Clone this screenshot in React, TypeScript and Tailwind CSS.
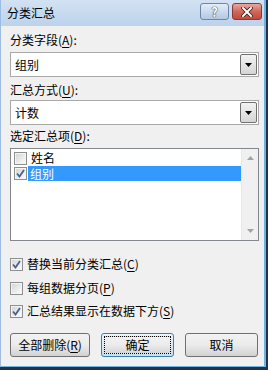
import type { ReactNode } from 'react';

const CheckBox = ({ checked }: { checked: boolean }) => (
  <span className="flex h-[13px] w-[13px] shrink-0 items-center justify-center border border-[#8e8f8f] bg-white">
    <span className="flex h-[11px] w-[11px] items-center justify-center border border-[#f4f4f4] bg-gradient-to-br from-[#d6d6d6] to-[#fbfbfb]">
      {checked && (
        <svg width="9" height="9" viewBox="0 0 9 9">
          <path d="M1 4.5 L3.5 7.5 L8 1" fill="none" stroke="#4a5f8f" strokeWidth="1.8" />
        </svg>
      )}
    </span>
  </span>
);

const Key = ({ children }: { children: ReactNode }) => (
  <span className="underline underline-offset-[2px]">{children}</span>
);

const Combo = ({ value }: { value: string }) => (
  <div className="flex h-[25px] items-stretch border border-[#a9a9a9] bg-white">
    <div className="flex flex-1 items-center pl-[4px]">{value}</div>
    <div className="m-[1px] flex w-[17px] items-center justify-center rounded-[2px] border border-[#707070] bg-gradient-to-b from-[#f2f2f2] to-[#d5d5d5]">
      <svg width="7" height="4" viewBox="0 0 7 4">
        <path d="M0 0 H7 L3.5 4 Z" fill="#000" />
      </svg>
    </div>
  </div>
);

const Button = ({ children, main }: { children: ReactNode; main?: boolean }) => (
  <button
    className={
      main
        ? 'flex h-[24px] w-[73px] items-center justify-center rounded-[3px] border border-[#3c7fb1] bg-gradient-to-b from-[#eaf6fd] to-[#c4e0f2] p-[2px]'
        : 'flex h-[24px] w-[73px] items-center justify-center rounded-[3px] border border-[#707070] bg-gradient-to-b from-[#f2f2f2] via-[#ebebeb] to-[#d2d2d2]'
    }
  >
    {main ? (
      <span className="flex h-full w-full items-center justify-center border border-dotted border-black bg-gradient-to-b from-[#f2f2f2] via-[#ebebeb] to-[#d6d6d6]">
        {children}
      </span>
    ) : (
      children
    )}
  </button>
);

const App = () => {
  return (
    <div className="flex h-[370px] w-[268px] flex-col bg-[#233246] font-['Noto_Sans_CJK_SC',sans-serif] text-[12px] leading-[16px] text-black">
      <div className="flex flex-1">
        <div className="flex w-[264px] flex-col border-l border-[#9cbde0]">
          {/* title bar */}
          <div className="flex h-[26px] items-center bg-gradient-to-b from-[#d3e2f3] to-[#bcd2eb] pl-[6px] pr-[2px]">
            <span>分类汇总</span>
            <div className="ml-auto flex gap-[3px] self-start pt-[3px]">
              <div className="flex h-[17px] w-[29px] items-center justify-center rounded-[3px] border border-[#6e86a6] bg-gradient-to-b from-[#e4edf8] to-[#b2c8e4]">
                <span className="text-[13px] font-bold leading-none text-white [text-shadow:0_0_1px_#222,0_0_1px_#222]">?</span>
              </div>
              <div className="flex h-[17px] w-[30px] items-center justify-center rounded-[3px] border border-[#8a3a32] bg-gradient-to-b from-[#e8a99d] via-[#d0685a] to-[#c24a3c]">
                <svg width="12" height="10" viewBox="0 0 12 10">
                  <path d="M2 1 L10 9 M10 1 L2 9" stroke="#3a1a16" strokeWidth="3.6" strokeLinecap="square" />
                  <path d="M2 1 L10 9 M10 1 L2 9" stroke="#fff" strokeWidth="2" strokeLinecap="square" />
                </svg>
              </div>
            </div>
          </div>

          {/* content */}
          <div className="flex flex-1 flex-col bg-[#f0f0f0] pl-[9px] pr-[5px]">
            <div className="mt-[6px]">
              分类字段(<Key>A</Key>):
            </div>
            <div className="mt-[4px]">
              <Combo value="组别" />
            </div>
            <div className="mt-[5px]">
              汇总方式(<Key>U</Key>):
            </div>
            <div className="mt-[2px]">
              <Combo value="计数" />
            </div>
            <div className="mt-[3px]">
              选定汇总项(<Key>D</Key>):
            </div>
            <div className="mt-[4px] flex h-[93px] border border-[#828790] bg-white">
              <div className="flex flex-1 flex-col pt-[1px]">
                <div className="flex h-[16px] items-center pl-[3px]">
                  <CheckBox checked={false} />
                  <span className="ml-[3px] pl-[1px]">姓名</span>
                </div>
                <div className="flex h-[15px] items-center pl-[3px]">
                  <CheckBox checked={true} />
                  <span className="ml-[1px] flex h-full flex-1 items-center bg-[#3399ff] pl-[2px] text-white">组别</span>
                </div>
              </div>
              <div className="flex w-[17px] flex-col items-center justify-between border-l border-[#e8e8e8] bg-[#f0f0f0] py-[7px]">
                <svg width="7" height="4" viewBox="0 0 7 4">
                  <path d="M0 4 H7 L3.5 0 Z" fill="#a3a3a3" />
                </svg>
                <svg width="7" height="4" viewBox="0 0 7 4">
                  <path d="M0 0 H7 L3.5 4 Z" fill="#a3a3a3" />
                </svg>
              </div>
            </div>

            <div className="mt-[15px] flex h-[16px] items-center gap-[4px]">
              <CheckBox checked={true} />
              <span>
                替换当前分类汇总(<Key>C</Key>)
              </span>
            </div>
            <div className="mt-[8px] flex h-[16px] items-center gap-[4px]">
              <CheckBox checked={false} />
              <span>
                每组数据分页(<Key>P</Key>)
              </span>
            </div>
            <div className="mt-[7px] flex h-[16px] items-center gap-[4px]">
              <CheckBox checked={true} />
              <span>
                汇总结果显示在数据下方(<Key>S</Key>)
              </span>
            </div>

            <div className="mt-[14px] flex gap-[11px]">
              <button className="flex h-[24px] w-[80px] items-center justify-center rounded-[3px] border border-[#707070] bg-gradient-to-b from-[#f2f2f2] via-[#ebebeb] to-[#d2d2d2]">
                全部删除(<Key>R</Key>)
              </button>
              <Button main>确定</Button>
              <Button>取消</Button>
            </div>
          </div>
          <div className="h-[1px] bg-[#6cb4e4]" />
        </div>
        <div className="w-[4px] border-l-2 border-[#6cb4e4]" />
      </div>
      <div className="h-[3px]" />
    </div>
  );
};

export default App;
